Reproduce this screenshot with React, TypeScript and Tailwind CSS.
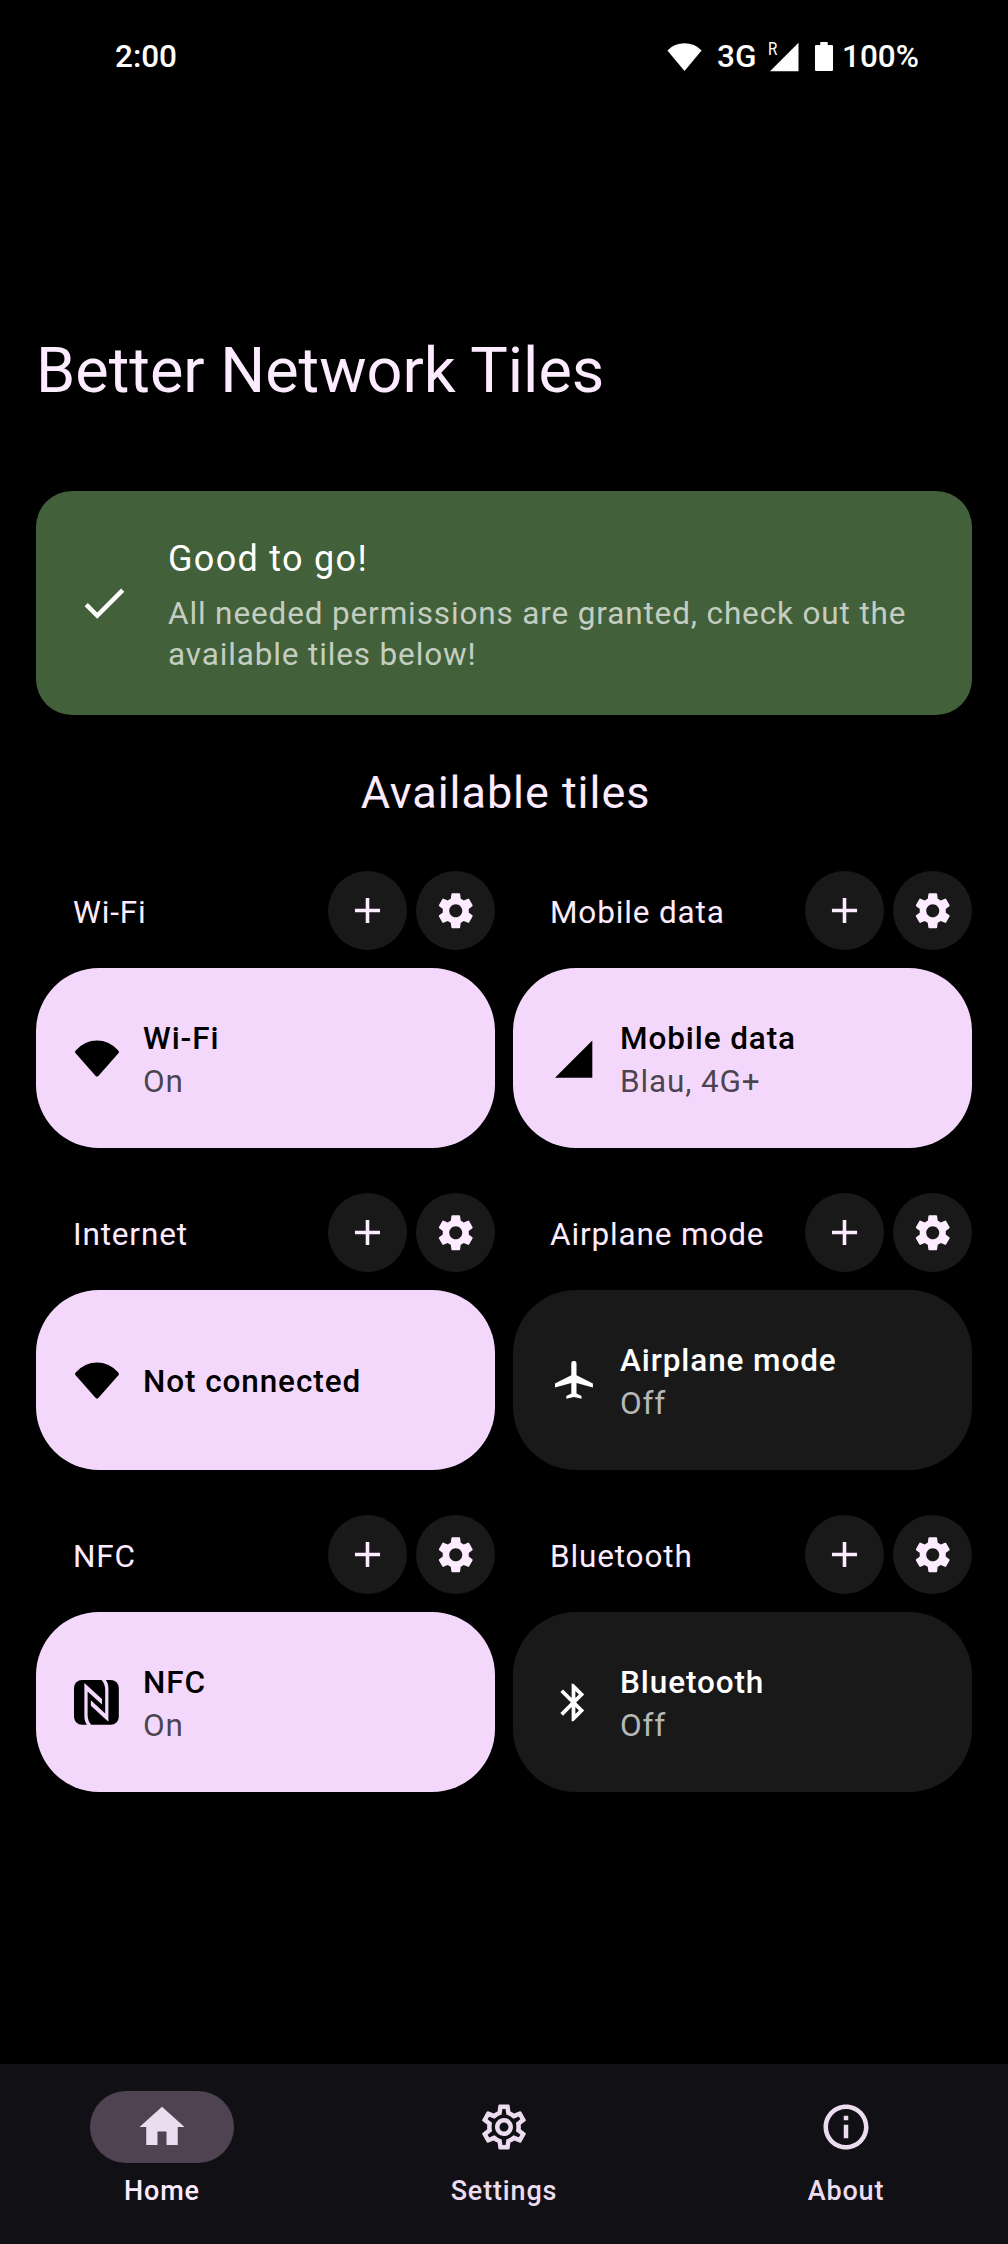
import type { ReactNode } from "react";
import {
  MdAdd,
  MdBluetooth,
  MdCheck,
  MdHome,
  MdOutlineInfo,
  MdOutlineSettings,
  MdSettings,
} from "react-icons/md";

function WifiIcon() {
  return (
    <svg width="44" height="37" viewBox="0 0 43.3 36.3" fill="currentColor">
      <path d="M1.2 9.8A27 27 0 0 1 42.1 9.8Q44 11.3 42.7 13L23.4 35Q21.65 37 19.9 35L.6 13Q-.7 11.3 1.2 9.8Z" />
    </svg>
  );
}

function SignalIcon() {
  return (
    <svg width="45" height="45" viewBox="0 0 45 45" fill="currentColor">
      <path d="M4 41.8H41.3V4.5Z" />
    </svg>
  );
}

function AirplaneIcon() {
  return (
    <svg width="38" height="38" viewBox="0 0 38 38" fill="currentColor">
      <path d="M16.3 2.5A2.6 2.6 0 0 1 21.5 2.5V14.2L37.9 22.6V26.6L21.5 21.9V32.4L26.5 35V37.8L18.9 36L11.3 37.8V35L16.3 32.4V21.9L0 26.6V22.6L16.3 14.2Z" />
    </svg>
  );
}

function NfcIcon() {
  const stroke =
    "M10.3 3L27.7 18.8V24.3L13.5 11.3V34.5Q13.6 41 17.2 44.5H13Q10.3 41.5 10.3 36Z";
  return (
    <svg width="45" height="45" viewBox="0 0 44.6 44.6">
      <rect width="44.4" height="44.4" rx="8" fill="currentColor" />
      <path d={stroke} className="fill-[#f3d8fb]" />
      <path d={stroke} transform="rotate(180 22.2 22.2)" className="fill-[#f3d8fb]" />
    </svg>
  );
}

function StatusBar() {
  return (
    <header className="flex h-[114px] items-center justify-between pr-[89px] pl-[115px] text-[31.5px] leading-[36px] font-medium text-white">
      <span>2:00</span>
      <div className="flex items-center">
        <svg width="35" height="30" viewBox="0 0 35 30" fill="currentColor">
          <path d="M.4 8.4A24 24 0 0 1 34.6 8.4L17.5 29Z" />
        </svg>
        <span className="ml-[15px] w-[40px]">3G</span>
        <span className="relative ml-[12px] block h-[30px] w-[30px]">
          <span className="absolute top-[-4px] left-[-1px] origin-left scale-x-80 text-[19px] leading-[22px] font-normal">
            R
          </span>
          <svg width="30" height="30" viewBox="0 0 30 30" fill="currentColor">
            <path d="M1 29.3H29.5V.8Z" />
          </svg>
        </span>
        <svg className="ml-[16px]" width="18" height="30" viewBox="0 0 18 30" fill="currentColor">
          <path d="M5.3 0H12.7V3H16.8Q18 3 18 4.2V27.8Q18 29 16.8 29H1.2Q0 29 0 27.8V4.2Q0 3 1.2 3H5.3Z" />
        </svg>
        <span className="ml-[9px] w-[77px]">100%</span>
      </div>
    </header>
  );
}

function RoundButton({ label, children }: { label: string; children: ReactNode }) {
  return (
    <button
      aria-label={label}
      className="flex size-[79px] items-center justify-center rounded-full bg-[#191919] text-[#fdebff]"
    >
      {children}
    </button>
  );
}

type TileProps = {
  label: string;
  title?: string;
  state?: string;
  active?: boolean;
  icon: ReactNode;
};

function Tile({ label, title = label, state, active = false, icon }: TileProps) {
  return (
    <section className="flex flex-col gap-[18px]">
      <div className="flex h-[79px] items-center gap-[9px] pl-[37px]">
        <h3 className="grow pt-1 text-[31.5px] leading-[40px] tracking-[0.85px] whitespace-nowrap text-[#fdebff]">
          {label}
        </h3>
        <RoundButton label={`Add ${label}`}>
          <MdAdd size={43} />
        </RoundButton>
        <RoundButton label={`Configure ${label}`}>
          <MdSettings size={43.5} />
        </RoundButton>
      </div>
      <div
        className={
          "flex h-[180px] items-center gap-6 rounded-[63px] pl-[38px] text-[31.5px] leading-[43px] " +
          (active ? "bg-[#f3d8fb] text-black" : "bg-[#191919] text-white")
        }
      >
        <span className="flex size-[45px] items-center justify-center">{icon}</span>
        <div className="pt-[3px]">
          <p className="font-medium tracking-[0.9px]">{title}</p>
          {state && (
            <p className={"tracking-[0.85px] " + (active ? "text-black/70" : "text-white/70")}>
              {state}
            </p>
          )}
        </div>
      </div>
    </section>
  );
}

function NavItem({ label, icon, selected = false }: { label: string; icon: ReactNode; selected?: boolean }) {
  return (
    <a className="flex flex-col items-center pt-[27px] text-[#ecdcf0]">
      <span
        className={
          "flex h-[72px] w-[144px] items-center justify-center rounded-full " +
          (selected ? "bg-[#4f4351]" : "")
        }
      >
        {icon}
      </span>
      <span
        className={
          "mt-[10px] text-[27px] leading-[36px] font-medium tracking-[0.85px] " +
          (selected ? "text-[#fdebff]" : "")
        }
      >
        {label}
      </span>
    </a>
  );
}

export default function App() {
  return (
    <div className="flex h-[2244px] w-[1008px] flex-col bg-black font-['Roboto',sans-serif]">
      <StatusBar />
      <main className="grow px-9">
        <h1 className="mt-[216px] text-[63px] leading-[81px] text-[#fdebff]">Better Network Tiles</h1>

        <div className="mt-[80px] flex h-[224px] items-center rounded-[36px] bg-[#426039] pl-[41px] text-white">
          <MdCheck size={54} />
          <div className="ml-[37px] w-[760px] pt-1">
            <h2 className="text-[36px] leading-[49px] tracking-[1.3px]">Good to go!</h2>
            <p className="mt-[9px] text-[31.5px] leading-[41px] tracking-[0.86px] text-white/70">
              All needed permissions are granted, check out the
              <br />
              available tiles below!
            </p>
          </div>
        </div>

        <h2 className="mt-[48px] pl-[3px] text-center text-[45px] leading-[60px] tracking-[0.95px] text-[#fdebff]">
          Available tiles
        </h2>

        <div className="mt-[48px] grid grid-cols-2 gap-x-[18px] gap-y-[45px]">
          <Tile label="Wi-Fi" state="On" active icon={<WifiIcon />} />
          <Tile label="Mobile data" state="Blau, 4G+" active icon={<SignalIcon />} />
          <Tile label="Internet" title="Not connected" active icon={<WifiIcon />} />
          <Tile label="Airplane mode" state="Off" icon={<AirplaneIcon />} />
          <Tile label="NFC" state="On" active icon={<NfcIcon />} />
          <Tile label="Bluetooth" state="Off" icon={<MdBluetooth size={45} />} />
        </div>
      </main>

      <nav className="grid h-[180px] grid-cols-3 gap-[18px] bg-[#111014]">
        <NavItem label="Home" selected icon={<MdHome size={54} />} />
        <NavItem label="Settings" icon={<MdOutlineSettings size={54} />} />
        <NavItem label="About" icon={<MdOutlineInfo size={54} />} />
      </nav>
    </div>
  );
}
